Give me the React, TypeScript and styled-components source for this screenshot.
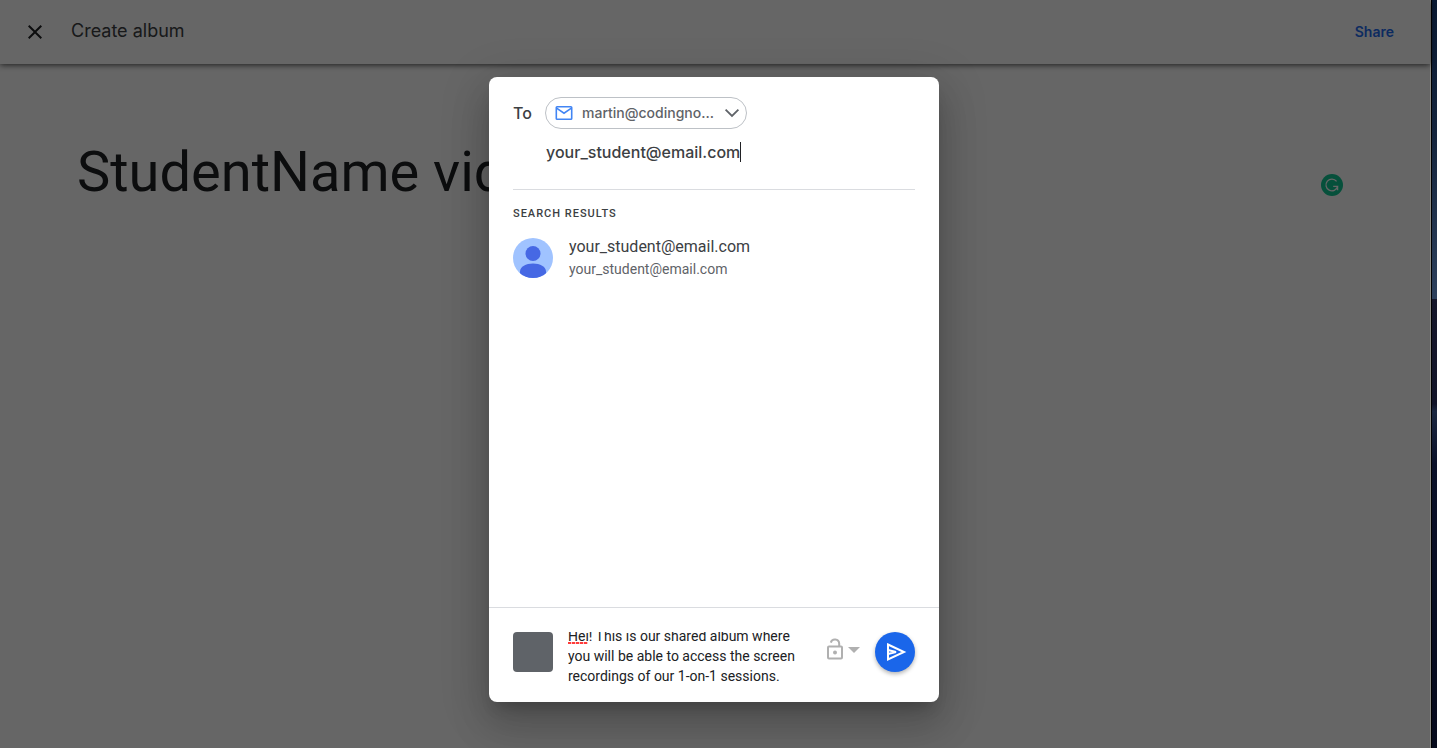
import React, { useEffect, useRef, useState } from "react";
import styled, { createGlobalStyle } from "styled-components";

const display = `"Google Sans", Inter, "Open Sans", sans-serif`;
const body = `Roboto, "Liberation Sans", sans-serif`;

const GlobalStyle = createGlobalStyle`
  *, *::before, *::after { box-sizing: border-box; }
  body { margin: 0; background: #000; font-family: ${body}; }
  button, input, textarea { font: inherit; color: inherit; margin: 0; padding: 0; border: 0; background: none; outline: 0; }
  button { cursor: pointer; }
`;

const Desktop = styled.div`
  display: grid;
  grid-template-columns: 1fr 5px;
  column-gap: 1px;
  min-height: 100vh;
  background: #000;
`;

const Wallpaper = styled.div`
  background: linear-gradient(
    #0a1a33 0%,
    #14243c 18%,
    #2d405c 40%,
    #15162a 40%,
    #121428 54%,
    #1b2740 55%,
    #0a1028 62%,
    #060a1c 100%
  );
`;

const Window = styled.div`
  position: relative;
  display: flex;
  flex-direction: column;
  border-right: 1px solid #8c8c88;
  background: #fff;
  background-clip: padding-box;
`;

const Header = styled.header`
  display: flex;
  align-items: center;
  height: 64px;
  padding: 0 36px 0 23px;
  box-shadow: 0 1px 6px rgba(0, 0, 0, 0.7);
`;

const CloseButton = styled.button`
  display: flex;
  width: 24px;
  height: 24px;
  color: #202124;
`;

const PageTitle = styled.h1`
  flex: 1;
  margin: 0 0 2px 24px;
  font: 400 18px/24px ${display};
  color: #3c4043;
`;

const ShareButton = styled.button`
  font: 600 14px/20px ${display};
  color: #1f6bf0;
`;

const AlbumArea = styled.main`
  display: flex;
  align-items: center;
  gap: 24px;
  padding: 72px 87px 0 77px;
`;

const AlbumName = styled.input`
  flex: 1;
  min-width: 0;
  height: 72px;
  font: 400 56px/72px ${body};
  color: #202124;
`;

const Checker = styled.button`
  display: flex;
  width: 22px;
  height: 22px;
  margin-top: 26px;
`;

const Scrim = styled.div`
  position: absolute;
  inset: 0;
  display: flex;
  justify-content: center;
  padding: 77px 2px 46px 0;
  background: rgba(0, 0, 0, 0.6);
`;

const Dialog = styled.section`
  display: flex;
  flex-direction: column;
  width: 450px;
  max-width: 100%;
  border-radius: 8px;
  background: #fff;
  box-shadow: 0 11px 15px -7px rgba(0, 0, 0, 0.2), 0 24px 38px 3px rgba(0, 0, 0, 0.14),
    0 9px 46px 8px rgba(0, 0, 0, 0.12);
`;

const Recipients = styled.div`
  display: grid;
  grid-template-columns: 32px 1fr;
  row-gap: 8px;
  margin: 0 24px;
  padding: 20px 0 22px;
  border-bottom: 1px solid #dadce0;
`;

const ToLabel = styled.label`
  font: 500 16px/32px ${display};
  color: #3c4043;
`;

const Chip = styled.button`
  justify-self: start;
  display: flex;
  align-items: center;
  width: 202px;
  height: 32px;
  padding: 0 5px 0 8px;
  border: 1px solid #bdc1c6;
  border-radius: 16px;
  color: #5f6368;
`;

const ChipText = styled.span`
  flex: 1;
  min-width: 0;
  margin: 0 8px;
  font: 500 14px/20px ${display};
  text-align: left;
  white-space: nowrap;
`;

const EntryRow = styled.div`
  grid-column: 2;
  display: flex;
  align-items: center;
  height: 30px;
  padding-left: 1px;
`;

const Entry = styled.input`
  field-sizing: content;
  font: 500 16px/24px ${display};
  color: #3c4043;
  caret-color: transparent;
`;

const Caret = styled.span`
  width: 1px;
  height: 20px;
  background: #202124;
`;

const Results = styled.div`
  flex: 1;
  padding: 16px 24px;
`;

const ResultsHeading = styled.h2`
  margin: 0 0 15px;
  font: 500 11px/16px ${body};
  letter-spacing: 1px;
  text-transform: uppercase;
  color: #3c4043;
`;

const Contact = styled.button`
  display: flex;
  align-items: center;
  gap: 16px;
  width: 100%;
  text-align: left;
`;

const ContactText = styled.span`
  display: flex;
  flex-direction: column;
  gap: 2px;
  line-height: 20px;
`;

const ContactName = styled.span`
  font-size: 16px;
  color: #3c4043;
`;

const ContactEmail = styled.span`
  font-size: 14px;
  color: #5f6368;
`;

const Footer = styled.footer`
  display: flex;
  align-items: flex-start;
  padding: 24px 24px 16px;
  border-top: 1px solid #dadce0;
`;

const Cover = styled.div`
  width: 40px;
  height: 40px;
  border-radius: 4px;
  background: #5f6368;
`;

const MessageBox = styled.div`
  position: relative;
  flex: 1;
  min-width: 0;
  margin: 0 12px 0 15px;
`;

const Message = styled.textarea`
  display: block;
  width: 100%;
  height: 54px;
  resize: none;
  scrollbar-width: none;
  font: 400 14px/20px ${body};
  color: #202124;
`;

const SpellingMark = styled.span`
  position: absolute;
  top: 10px;
  left: 0;
  width: 20px;
  height: 2px;
  background: repeating-linear-gradient(90deg, #ff3b3b 0 3px, #ffc4c4 3px 4px);
`;

const AccessButton = styled.button`
  display: flex;
  align-items: center;
  height: 34px;
  margin-right: 15px;
  color: #b0b0b0;
`;

const SendButton = styled.button`
  display: flex;
  align-items: center;
  justify-content: center;
  width: 40px;
  height: 40px;
  border-radius: 50%;
  background: #1a66ea;
  color: #fff;
  box-shadow: 0 2px 4px rgba(0, 0, 0, 0.3);
`;

export default function App() {
  const [album, setAlbum] = useState("StudentName videos");
  const [recipient, setRecipient] = useState("your_student@email.com");
  const [message, setMessage] = useState(
    "Hei! This is our shared album where you will be able to access the screen recordings of our 1-on-1 sessions."
  );
  const messageRef = useRef<HTMLTextAreaElement>(null);

  useEffect(() => {
    const el = messageRef.current;
    if (el) el.scrollTop = el.scrollHeight;
  }, []);

  return (
    <Desktop>
      <GlobalStyle />
      <Window>
        <Header>
          <CloseButton aria-label="Close">
            <svg width="24" height="24" viewBox="0 0 24 24" fill="currentColor">
              <path d="M19 6.41L17.59 5 12 10.59 6.41 5 5 6.41 10.59 12 5 17.59 6.41 19 12 13.41 17.59 19 19 17.59 13.41 12z" />
            </svg>
          </CloseButton>
          <PageTitle>Create album</PageTitle>
          <ShareButton>Share</ShareButton>
        </Header>
        <AlbumArea>
          <AlbumName aria-label="Album name" value={album} onChange={(e) => setAlbum(e.target.value)} />
          <Checker aria-label="Check writing">
            <svg width="22" height="22" viewBox="0 0 22 22" fill="none">
              <circle cx="11" cy="11" r="11" fill="#11c795" />
              <path d="M15.6 7.4A5.9 5.9 0 1 0 16.6 12.4H12.2M16.6 12.4V16.2" stroke="#fff" strokeWidth="1.3" />
            </svg>
          </Checker>
        </AlbumArea>
        <Scrim>
          <Dialog role="dialog" aria-label="Share album">
            <Recipients>
              <ToLabel htmlFor="recipient">To</ToLabel>
              <Chip>
                <svg width="20" height="20" viewBox="0 0 20 20" fill="none" stroke="#4285f4" strokeWidth="1.6">
                  <rect x="2.3" y="3.8" width="15.4" height="12.4" rx="0.8" />
                  <path d="M2.6 5.2L10 10.2L17.4 5.2" />
                </svg>
                <ChipText>martin@codingno...</ChipText>
                <svg width="18" height="18" viewBox="0 0 18 18" fill="none" stroke="currentColor" strokeWidth="1.8">
                  <path d="M2.6 5.6L9 12L15.4 5.6" />
                </svg>
              </Chip>
              <EntryRow>
                <Entry
                  id="recipient"
                  spellCheck={false}
                  value={recipient}
                  onChange={(e) => setRecipient(e.target.value)}
                />
                <Caret />
              </EntryRow>
            </Recipients>
            <Results>
              <ResultsHeading>Search results</ResultsHeading>
              <Contact>
                <svg width="40" height="40" viewBox="0 0 40 40">
                  <clipPath id="avatar">
                    <circle cx="20" cy="20" r="20" />
                  </clipPath>
                  <g clipPath="url(#avatar)">
                    <rect width="40" height="40" fill="#a0c3ff" />
                    <circle cx="20" cy="15.5" r="7.5" fill="#4668e4" />
                    <path d="M7 40V33.5C7 28.5 13 25.5 20 25.5S33 28.5 33 33.5V40Z" fill="#4668e4" />
                  </g>
                </svg>
                <ContactText>
                  <ContactName>your_student@email.com</ContactName>
                  <ContactEmail>your_student@email.com</ContactEmail>
                </ContactText>
              </Contact>
            </Results>
            <Footer>
              <Cover />
              <MessageBox>
                <Message
                  ref={messageRef}
                  aria-label="Message"
                  spellCheck={false}
                  value={message}
                  onChange={(e) => setMessage(e.target.value)}
                />
                <SpellingMark />
              </MessageBox>
              <AccessButton aria-label="Access options">
                <svg width="34" height="24" viewBox="0 0 34 24" fill="none">
                  <rect x="2" y="9.5" width="14" height="12" rx="1" stroke="currentColor" strokeWidth="2" />
                  <path d="M4.8 5.6A4.3 4.3 0 0 1 13.2 6.6V9" stroke="currentColor" strokeWidth="2" />
                  <circle cx="9" cy="15.5" r="2" fill="currentColor" />
                  <path d="M22 10H34L28 16Z" fill="currentColor" />
                </svg>
              </AccessButton>
              <SendButton aria-label="Send">
                <svg width="24" height="24" viewBox="0 0 24 24" fill="none" stroke="currentColor" strokeWidth="2">
                  <path d="M5 4.5L21 12L5 19.5V4.5Z" />
                  <path d="M5 10L13 12L5 14" />
                </svg>
              </SendButton>
            </Footer>
          </Dialog>
        </Scrim>
      </Window>
      <Wallpaper />
    </Desktop>
  );
}
